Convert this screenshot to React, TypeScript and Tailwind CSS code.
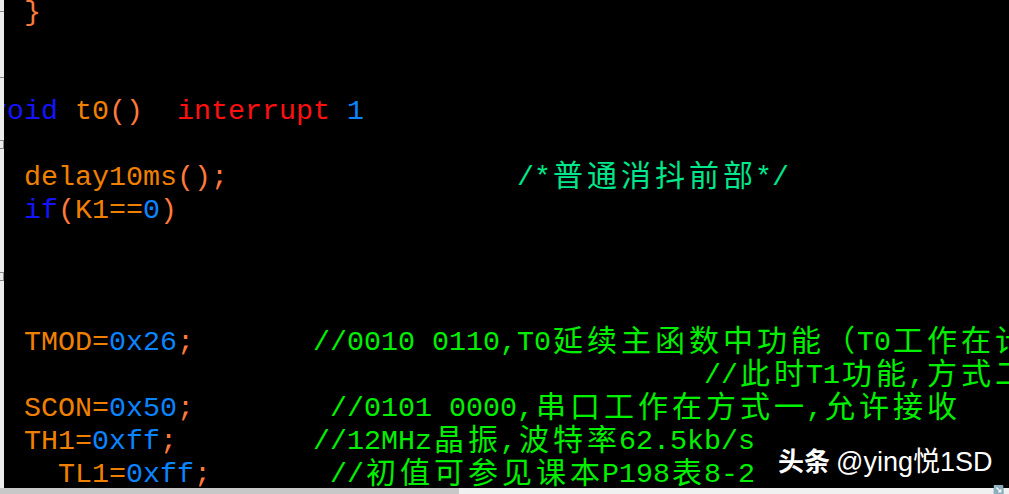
type Seg = [string, string]

const ID = 'text-[#f08000]'
const PU = 'text-[#ff7a3c]'
const NUM = 'text-[#0a84ff]'
const KW = 'text-[#1414ff]'
const RED = 'text-[#ff1010]'
const CMT = 'text-[#00f000]'
const BCMT = 'text-[#00e68a]'

const lines: Seg[][] = [
  [['  ', ID], ['}', PU]],
  [],
  [],
  [['void', KW], [' ', ID], ['t0', ID], ['()', PU], ['  ', ID], ['interrupt', RED], [' ', ID], ['1', NUM]],
  [],
  [['  delay10ms', ID], ['();', PU], ['                 ', ID], ['/*普通消抖前部*/', BCMT]],
  [['  ', ID], ['if', KW], ['(', PU], ['K1==', ID], ['0', NUM], [')', PU]],
  [],
  [],
  [],
  [['  TMOD=', ID], ['0x26', NUM], [';', PU], ['       ', ID], ['//0010 0110,T0延续主函数中功能（T0工作在计数方式）', CMT]],
  [['                                          ', ID], ['//此时T1功能,方式二', CMT]],
  [['  SCON=', ID], ['0x50', NUM], [';', PU], ['        ', ID], ['//0101 0000,串口工作在方式一,允许接收', CMT]],
  [['  TH1=', ID], ['0xff', NUM], [';', PU], ['        ', ID], ['//12MHz晶振,波特率62.5kb/s', CMT]],
  [['    TL1=', ID], ['0xff', NUM], [';', PU], ['       ', ID], ['//初值可参见课本P198表8-2', CMT]],
]

const isWide = (ch: string) => ch.charCodeAt(0) > 0x2e80

// CJK glyphs take two columns, like the editor's fixed-width font
function MonoText({ text }: { text: string }) {
  const parts: (string | { wide: string })[] = []
  let run = ''
  for (const ch of Array.from(text)) {
    if (isWide(ch)) {
      if (run) parts.push(run)
      run = ''
      parts.push({ wide: ch })
    } else {
      run += ch
    }
  }
  if (run) parts.push(run)

  return (
    <>
      {parts.map((p, i) =>
        typeof p === 'string' ? (
          <span key={i}>{p}</span>
        ) : (
          <span
            key={i}
            className="relative -top-[4px] inline-block h-[33px] w-[34px] align-top text-center font-['Noto_Sans_CJK_SC',sans-serif] text-[30px] leading-[33px]"
          >
            {p.wide}
          </span>
        )
      )}
    </>
  )
}

function Gutter() {
  return (
    <div className="relative w-[4px] bg-[#ececec]">
      <div className="absolute left-0 top-[11px] h-px w-[4px] bg-[#888]" />
      <div className="absolute left-0 top-[77px] h-px w-[4px] bg-[#888]" />
      <div className="absolute left-[-4px] top-[140px] h-[9px] w-[8px] border border-[#888]" />
      <div className="absolute left-[-4px] top-[272px] h-[9px] w-[8px] border border-[#888]" />
    </div>
  )
}

export default function App() {
  return (
    <div className="flex h-[494px] w-[1009px] flex-col overflow-hidden bg-black">
      <div className="flex flex-1 overflow-hidden">
        <Gutter />
        <div className="relative flex-1 overflow-hidden bg-black">
          <div className="-ml-[14px] -mt-[4px] whitespace-pre font-['Liberation_Mono',monospace] text-[28.33px] leading-[33px]">
            {lines.map((segs, i) => (
              <div key={i} className="h-[33px]">
                {segs.map(([text, color], j) => (
                  <span key={j} className={color}>
                    <MonoText text={text} />
                  </span>
                ))}
              </div>
            ))}
          </div>

          <div className="absolute left-[774px] top-[447px] flex items-baseline gap-[6px] whitespace-nowrap text-white leading-none">
            <span className="font-['Noto_Sans_CJK_SC',sans-serif] text-[26px] font-bold">头条</span>
            <span className="font-['Liberation_Sans','Noto_Sans_CJK_SC',sans-serif] text-[27px]">@ying悦1SD</span>
          </div>
        </div>
      </div>

      <div className="flex h-[6px]">
        <div className="w-[459px] bg-[#c8c8c8]" />
        <div className="relative flex-1 bg-[#f0f0f0]">
          <span className="absolute right-[4px] top-[-3px] text-[9px] leading-none text-[#555]">↘</span>
        </div>
      </div>
    </div>
  )
}
